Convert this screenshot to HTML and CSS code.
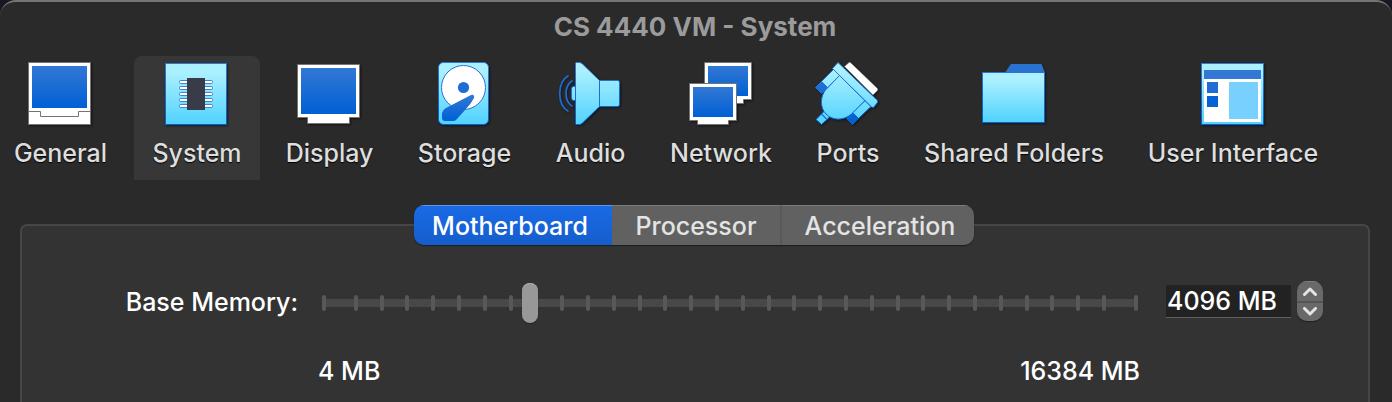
FILE: index.html
```html
<!DOCTYPE html>
<html lang="en">
<head>
<meta charset="utf-8">
<title>CS 4440 VM - System</title>
<link rel="stylesheet" href="styles.css">
</head>
<body>
<svg class="defs" width="0" height="0" aria-hidden="true">
  <defs>
    <linearGradient id="blue" x1="0" y1="0" x2="0" y2="1"><stop offset="0" stop-color="#3278d4"/><stop offset="1" stop-color="#0060d4"/></linearGradient>
    <linearGradient id="cyan" x1="0" y1="0" x2="0" y2="1"><stop offset="0.15" stop-color="#aaf0ff"/><stop offset="1" stop-color="#50d2ff"/></linearGradient>
    <linearGradient id="cyanAll" gradientUnits="userSpaceOnUse" x1="0" y1="0" x2="0" y2="63"><stop offset="0.15" stop-color="#aaf0ff"/><stop offset="1" stop-color="#50d2ff"/></linearGradient>
    <linearGradient id="blueAll" gradientUnits="userSpaceOnUse" x1="0" y1="0" x2="0" y2="63"><stop offset="0" stop-color="#3278d4"/><stop offset="1" stop-color="#0060d4"/></linearGradient>
  </defs>
</svg>
<div class="window">
  <h1 class="title">CS 4440 VM - System</h1>
  <nav class="toolbar" aria-label="Settings">
    <button class="tool" type="button">
      <svg width="63" height="63" viewBox="0 0 63 63"><rect x=".5" y=".5" width="62" height="62" fill="#fff" stroke="#747474"/><rect x="4" y="4" width="55" height="42" fill="url(#blue)"/><path d="M.5 49.5h12v5h38v-5h12" fill="none" stroke="#747474"/></svg>
      <span>General</span>
    </button>
    <button class="tool active" type="button" aria-current="page">
      <svg width="63" height="63" viewBox="0 0 63 63"><rect x=".5" y="1.5" width="61" height="61" fill="url(#cyan)" stroke="url(#blueAll)"/><g fill="#fff" stroke="#4380c8"><rect x="14.500" y="18.500" width="33" height="3" rx="1"/><rect x="14.500" y="24.500" width="33" height="3" rx="1"/><rect x="14.500" y="30.500" width="33" height="3" rx="1"/><rect x="14.500" y="36.500" width="33" height="3" rx="1"/><rect x="14.500" y="42.500" width="33" height="3" rx="1"/></g><rect x="22" y="16" width="18" height="32" fill="#373c48"/></svg>
      <span>System</span>
    </button>
    <button class="tool" type="button">
      <svg width="63" height="63" viewBox="0 0 63 63"><path d="M.5 2.500h62v53h-10v6h-42v-6h-10z" fill="#fff" stroke="#747474"/><rect x="4" y="6" width="55" height="46" fill="url(#blue)"/></svg>
      <span>Display</span>
    </button>
    <button class="tool" type="button">
      <svg width="51" height="63" viewBox="0 0 51 63"><rect x=".5" y=".5" width="50" height="62" rx="5" fill="url(#cyan)" stroke="url(#blueAll)"/><circle cx="25.500" cy="25.500" r="22" fill="#fff" stroke="#2a72d0"/><circle cx="25.500" cy="25.500" r="5.600" fill="#1e6cd4"/><path d="M33 33Q36.500 32 36 36Q33 42 27 48L19 57Q17.500 59 15.500 59H7Q4 58.500 4 56V51Q4.500 48 8 46Z" fill="url(#blue)"/></svg>
      <span>Storage</span>
    </button>
    <button class="tool" type="button">
      <svg width="63" height="63" viewBox="0 0 63 63"><path d="M17.500 24.500h-2q-2 0-2 3v8q0 3 2 3h2z" fill="url(#cyanAll)" stroke="url(#blueAll)"/><path d="M17.500 1.500q0-1 1-1h3q1.500 0 3 1.500l17 16.500h18q2 0 2 2v22q0 2-2 2h-18l-17 16.500q-1.500 1.500-3 1.500h-3q-1 0-1-1z" fill="url(#cyanAll)" stroke="url(#blueAll)"/><path d="M41.500 18.500v26" stroke="#1e6cd4"/><path d="M10.500 13.500C-1.200 20.500-1.200 42.500 10.500 49.500M14.500 18.500C5.800 24 5.800 39 14.500 44.500" fill="none" stroke="#1e6cd4" stroke-width="1.700"/></svg>
      <span>Audio</span>
    </button>
    <button class="tool" type="button">
      <svg width="63" height="63" viewBox="0 0 63 63"><path d="M15.500.5h47v37h-8v4h-30v-4h-9z" fill="#fff" stroke="#747474"/><rect x="19" y="4" width="40" height="30" fill="url(#blue)"/><path d="M.5 21.500h47v37h-8v4h-31v-4h-8z" fill="#fff" stroke="#747474"/><rect x="4" y="25" width="40" height="30" fill="url(#blue)"/></svg>
      <span>Network</span>
    </button>
    <button class="tool" type="button">
      <svg width="64" height="63" viewBox="0 0 64 63"><path d="M34 .5Q35 0 36 1L62.500 26.500Q63 27.500 62.500 28.500L58 33L29.500 4.500Z" fill="#fff" stroke="#747474" stroke-width=".6"/><g stroke="url(#blueAll)" stroke-linejoin="round"><path d="M6.500 52L12 57.500L6.500 62.500L1 57.500ZM18.500 7.500L24.500 13.500L12.500 25.500L6.500 19.500ZM50 38.500L56 44.500L43.500 56.500L37.500 50.500ZM6.500 52L10 48.500L15.500 54L12 57.500Z" fill="url(#cyanAll)"/><path d="M6.500 19.500L.5 25.500L6.500 31.500L12.500 25.500ZM37.500 50.500L43.500 56.500L37.500 62.500L31.500 56.500Z" fill="url(#blueAll)"/><path d="M24.500 13.500L50 38.500L36 52.500C28 59 17 58.500 11 52C5 46 5 35 10.500 28Z" fill="url(#cyanAll)"/><path d="M23 .5L62.500 38.500V40.500L58.500 45.500L56.500 45L17.500 6.500Z" fill="url(#cyanAll)"/></g></svg>
      <span>Ports</span>
    </button>
    <button class="tool" type="button">
      <svg width="63" height="63" viewBox="0 0 63 63"><path d="M23 10.500L29 2H59.500L63 10.500Z" fill="#2a72d0"/><rect x=".5" y="10.500" width="62" height="50" fill="url(#cyan)" stroke="url(#blueAll)"/></svg>
      <span>Shared Folders</span>
    </button>
    <button class="tool" type="button">
      <svg width="63" height="63" viewBox="0 0 63 63"><rect x=".5" y="1.500" width="62" height="61" fill="url(#cyan)" stroke="url(#blueAll)"/><rect x="3" y="8" width="57" height="52" fill="#fff"/><path d="M3 8h57v9H3z" fill="#3278d4"/><path d="M6 20h11v11H6z" fill="#1e6cd4"/><path d="M6 34h11v11H6z" fill="#0562d4"/><path d="M28 20h29v37H28z" fill="#78d0ff"/></svg>
      <span>User Interface</span>
    </button>
  </nav>
  <main class="content">
    <div class="tabs" role="tablist">
      <button class="tab selected" type="button" role="tab" aria-selected="true">Motherboard</button>
      <button class="tab" type="button" role="tab" aria-selected="false">Processor</button>
      <button class="tab" type="button" role="tab" aria-selected="false">Acceleration</button>
    </div>
    <section class="panel">
      <label class="label" for="memory">Base Memory:</label>
      <div class="slider">
        <div class="ticks" aria-hidden="true"><i></i><i></i><i></i><i></i><i></i><i></i><i></i><i></i><i></i><i></i><i></i><i></i><i></i><i></i><i></i><i></i><i></i><i></i><i></i><i></i><i></i><i></i><i></i><i></i><i></i><i></i><i></i><i></i><i></i><i></i><i></i><i></i></div>
        <input class="range" id="memory" type="range" min="4" max="16384" step="4" value="4096">
      </div>
      <div class="spin">
        <input class="amount" type="text" value="4096 MB" aria-label="Base memory amount">
        <div class="stepper">
          <button type="button" aria-label="Increase"><svg width="14" height="9" viewBox="0 0 14 9"><path d="M1.500 7.500L7 2L12.500 7.500"/></svg></button>
          <button type="button" aria-label="Decrease"><svg width="14" height="9" viewBox="0 0 14 9"><path d="M1.500 1.500L7 7L12.500 1.500"/></svg></button>
        </div>
      </div>
      <div class="limits"><span>4 MB</span><span>16384 MB</span></div>
    </section>
  </main>
</div>
</body>
</html>
```
FILE: styles.css
```css
* { box-sizing: border-box; }

body {
  margin: 0;
  background: #16191f;
  color: #fff;
  font: 500 25px/32px Inter, "Liberation Sans", sans-serif;
  overflow: hidden;
}

button, input { margin: 0; padding: 0; border: 0; font: inherit; color: inherit; }

.defs { position: absolute; }

.window {
  display: flex;
  flex-direction: column;
  min-height: 100vh;
  background: #2a2a2a;
  border-top: 2px solid #747474;
  border-radius: 16px 16px 0 0;
}

.title {
  margin: 0;
  padding: 9px 2px 13px 0;
  color: #9b9b9b;
  font-size: 26px;
  line-height: 32px;
  font-weight: 700;
  text-align: center;
}

.toolbar {
  display: grid;
  grid-template-columns: 131px 126px 123px 131px 105px 140px 98px 218px 204px;
  column-gap: 8px;
  margin-left: -5px;
}

.tool {
  display: flex;
  flex-direction: column;
  align-items: center;
  gap: 12px;
  height: 124px;
  padding-top: 6px;
  background: none;
  color: #dedede;
  border-radius: 8px 8px 0 0;
  white-space: nowrap;
  text-shadow: 0 1px 1px #000;
}

.tool svg {
  margin-right: 2px;
  filter: drop-shadow(1px 1px 1px rgba(0, 0, 0, 0.5));
}

.active { background: #373737; }

.content {
  display: flex;
  flex: 1;
  flex-direction: column;
  padding: 25px 22px 0 20px;
}

.tabs {
  z-index: 1;
  display: grid;
  grid-template-columns: 198px 168px 194px;
  align-self: center;
  height: 40px;
  margin: 0 2px -21px 0;
  overflow: hidden;
  border-radius: 10px;
  box-shadow: 0 1px 1px #1c1c1c;
}

.tab {
  background: #616161;
  border-top: 1px solid #7a7a7a;
  color: #e4e4e4;
}

.tab + .tab + .tab { padding-left: 4px; border-left: 2px solid #585858; }

.selected {
  padding-right: 6px;
  background: linear-gradient(#196ae6, #165dcb);
  border-top-color: #5b95ee;
  color: #fff;
}

.panel {
  display: grid;
  flex: 1;
  grid-template-columns: 276px 1fr 157px;
  align-content: start;
  align-items: start;
  column-gap: 24px;
  row-gap: 32px;
  padding: 55px 45px 0 0;
  background: #333;
  border: 2px solid #464646;
  border-bottom: 0;
  border-radius: 7px 7px 0 0;
}

.label { padding-top: 5px; text-align: right; }

.slider { display: grid; align-items: center; margin: 2px 4px 0 0; }
.ticks, .range { grid-area: 1 / 1; }

.ticks {
  display: flex;
  justify-content: space-between;
  height: 16px;
  background: linear-gradient(#484848, #484848) center / 100% 8px no-repeat;
}

.ticks i { width: 4px; background: #585858; border-radius: 2px; }
.ticks i:first-child { margin-right: 6px; }
.ticks i:last-child { margin-left: 6px; }

.range {
  width: 100%;
  height: 40px;
  background: none;
  appearance: none;
  -webkit-appearance: none;
}

.range::-webkit-slider-thumb {
  width: 16px;
  height: 40px;
  background: #989898;
  border-radius: 8px;
  box-shadow: inset 0 1px 0 #a9a9a9, 0 1px 1px #222;
  -webkit-appearance: none;
}

.spin { display: flex; align-items: center; gap: 6px; }

.amount {
  flex: 1;
  min-width: 0;
  height: 33px;
  padding: 1px 0 0 1px;
  background: #222;
  border-bottom: 1px solid #606060;
}

.stepper {
  display: flex;
  flex-direction: column;
  width: 26px;
  height: 40px;
  overflow: hidden;
  border-radius: 10px;
  box-shadow: 0 1px 1px #222;
}

.stepper button {
  display: flex;
  flex: 1;
  align-items: center;
  justify-content: center;
  background: #696969;
  border-top: 1px solid #7c7c7c;
}

.stepper button + button { border-top: 2px solid #555; }

.stepper path {
  fill: none;
  stroke: #e4e4e4;
  stroke-width: 3;
  stroke-linecap: round;
  stroke-linejoin: round;
}

.limits {
  display: flex;
  grid-column: 2;
  justify-content: space-between;
  margin: 0 2px 0 -4px;
}
```
